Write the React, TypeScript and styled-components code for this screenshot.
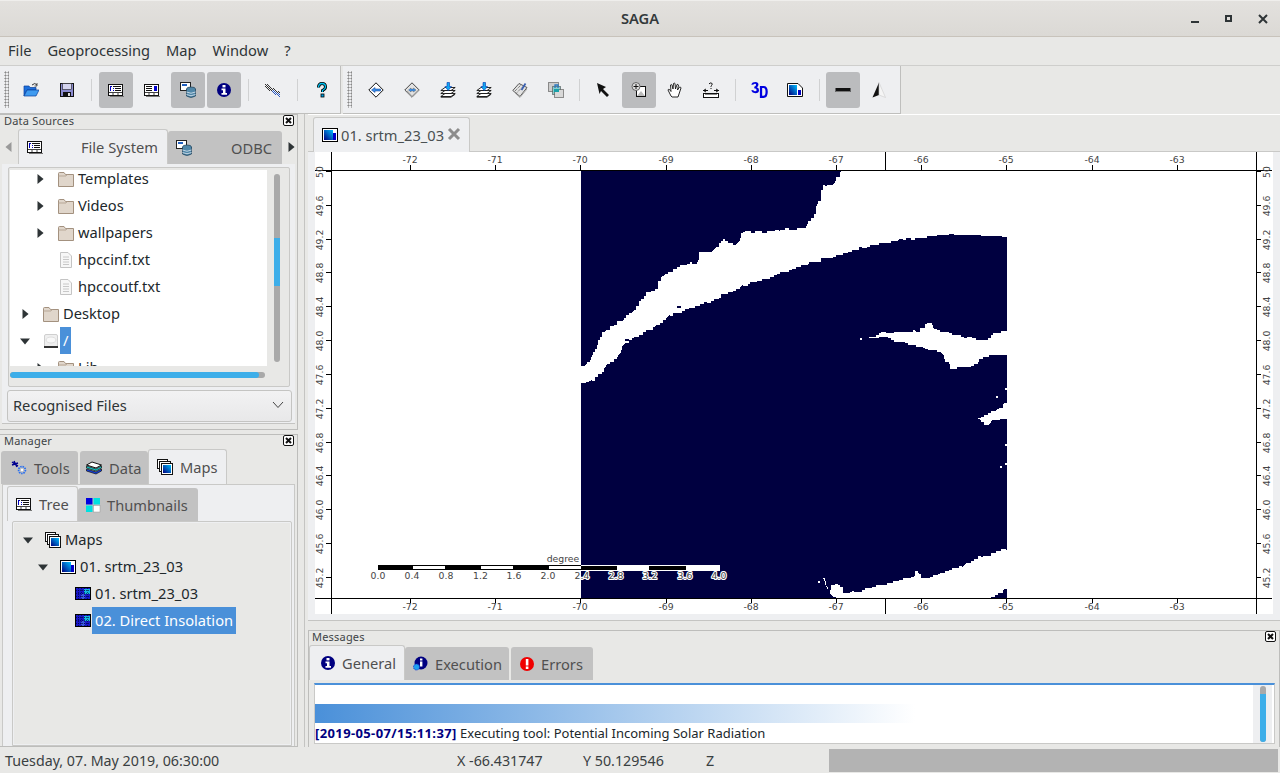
import React from "react";
import styled, { createGlobalStyle } from "styled-components";

const Global = createGlobalStyle`
  html, body { margin: 0; padding: 0; background: #e8e8e6; }
  body { font-family: "Noto Sans", sans-serif; font-size: 14.67px; color: #2e3436; }
  * { box-sizing: border-box; }
  svg { flex: none; }
`;

const Shell = styled.div`
  width: 1280px; height: 773px; display: flex; flex-direction: column; overflow: hidden; background: #e8e8e6;
`;
const TitleBar = styled.header`
  height: 37px; flex: none; display: flex; align-items: center; justify-content: center; position: relative; padding-bottom: 2px;
  background: linear-gradient(#e3e1de, #dbd9d5); border-bottom: 1px solid #c8c3bb; border-top: 1px solid #efeeec;
  font-size: 14.67px; font-weight: 600; color: #33393b;
`;
const WindowButtons = styled.div`
  position: absolute; right: 0; top: 0; height: 36px; display: flex; align-items: center;
`;
const WinBtn = styled.div`
  width: 34px; height: 36px; display: flex; align-items: center; justify-content: center;
`;
const MenuBar = styled.nav`
  height: 29px; flex: none; display: flex; align-items: center; padding: 0 8px 2px; gap: 16px;
  border-bottom: 1px solid #cececc; font-size: 14.67px; color: #2e3436;
`;
const ToolbarRow = styled.div`
  height: 48px; flex: none; display: flex; align-items: stretch;
`;
const ToolGroup = styled.div<{ $w: number; $pad: number }>`
  width: ${(p) => p.$w}px; display: flex; align-items: center; background: #eeeff1; padding-left: ${(p) => p.$pad}px; position: relative;
  border-right: 1px solid #bfbfbd; border-bottom: 1px solid #bfbfbd; margin-right: 2px;
`;
const Grip = styled.div`
  position: absolute; left: 4px; top: 5px; bottom: 5px; width: 5px; background-image: radial-gradient(#888 45%, transparent 50%); background-size: 3px 3px;
`;
const ToolBtn = styled.div<{ $on?: boolean }>`
  width: 34px; height: 36px; margin: 0 1px; border-radius: 3px; display: flex; align-items: center; justify-content: center;
  background: ${(p) => (p.$on ? "#bbbcbe" : "transparent")};
`;
const ToolSep = styled.div<{ $l?: number; $r?: number }>`
  width: 1px; height: 22px; background: #d0d1d2; margin: 0 ${(p) => p.$r ?? 6}px 0 ${(p) => p.$l ?? 6}px;
`;
const Workspace = styled.div`
  flex: 1; min-height: 0; display: flex;
`;
const LeftDock = styled.aside`
  width: 305px; flex: none; display: flex; flex-direction: column; padding-right: 6px; border-right: 1px solid #c4c4c2;
`;
const DockPanel = styled.section<{ $h: number; $top?: number }>`
  height: ${(p) => p.$h}px; margin-top: ${(p) => p.$top ?? 0}px; flex: none; display: flex; flex-direction: column; position: relative;
  border-top: 1px solid #bdbdbb; border-right: 1px solid #bdbdbb; border-bottom: 1px solid #bdbdbb;
`;
const DockTitle = styled.div`
  height: 13px; flex: none; font-size: 11px; line-height: 11px; padding: 0 3px 2px 4px; color: #3d4345; letter-spacing: 0.2px;
  display: flex; justify-content: space-between; align-items: center;
`;
const TabStrip = styled.div<{ $pad?: number }>`
  display: flex; align-items: flex-end; height: 35px; flex: none; padding-left: ${(p) => p.$pad ?? 0}px; margin-top: 1px;
`;
const Tab = styled.div<{ $on?: boolean; $w: number; $pl?: number; $gap?: number; $ml?: number }>`
  width: ${(p) => p.$w}px; height: ${(p) => (p.$on ? 35 : 33)}px; display: flex; align-items: center; gap: ${(p) => p.$gap ?? 7}px;
  padding: 0 ${(p) => (p.$on ? 9 : 10)}px 0 ${(p) => p.$pl ?? 8}px; flex: none; margin-left: ${(p) => p.$ml ?? 0}px; white-space: nowrap;
  font-size: 14.67px; color: #505050; border-radius: 3px 3px 0 0;
  background: ${(p) => (p.$on ? "#eeeff1" : "#c2c2c2")};
  border: ${(p) => (p.$on ? "1px solid #c9c9c7" : "none")}; border-bottom: none;
`;
const TabLabelEnd = styled.span`
  margin-left: auto;
`;
const ArrowCell = styled.div`
  width: 18px; flex: none; display: flex; align-items: center; justify-content: center; align-self: center;
`;
const TabPane = styled.div`
  margin: 0 2px; height: 260px; flex: none; background: #eeeff1; border-bottom: 1px solid #c4c4c2; padding-top: 3px;
`;
const FileBox = styled.div`
  height: 220px; margin: 0 5px 0 6px; background: #e8e8e6; border: 1px solid #c9c9c7; border-radius: 2px; display: flex; flex-direction: column; padding: 2px 2px 0 1px;
`;
const FileTop = styled.div`
  height: 196px; flex: none; display: flex;
`;
const Caret = styled.div`
  width: 14px; height: 14px; flex: none; display: flex; align-items: center; justify-content: center; margin-right: 10px;
`;
const TreeView = styled.div`
  width: 259px; height: 196px; background: #fff; overflow: hidden;
  ${Caret} { margin-right: 11px; }
`;
const Row = styled.div<{ $depth: number }>`
  height: 27px; display: flex; align-items: center; padding-left: ${(p) => p.$depth * 15 + 8}px; font-size: 14.67px; color: #20272b; white-space: nowrap; flex: none;
`;
const ScrolledRow = styled(Row)`
  height: 17px; margin-bottom: 5px;
`;
const Label = styled.span<{ $sel?: boolean }>`
  height: 27px; line-height: 26px; padding: 0 3px; margin-left: 1px; background: ${(p) => (p.$sel ? "#4a90d9" : "transparent")}; color: ${(p) => (p.$sel ? "#fff" : "inherit")};
`;
const VScroll = styled.div`
  width: 20px; flex: none; display: flex; justify-content: center; padding-top: 4px;
`;
const VTrack = styled.div`
  width: 6px; height: 188px; border-radius: 3px; background: #a9a9a9; position: relative; overflow: hidden;
`;
const ScrollThumb = styled.div<{ $top: number; $len: number }>`
  position: absolute; left: 0; right: 0; top: ${(p) => p.$top}px; height: ${(p) => p.$len}px; background: #3daee9;
`;
const HScroll = styled.div`
  height: 6px; width: 255px; margin-top: 6px; background: #a9a9a9; border-radius: 3px; overflow: hidden;
`;
const HThumb = styled.div`
  height: 100%; width: 249px; background: #3daee9; border-radius: 3px;
`;
const Combo = styled.div`
  height: 32px; margin: 3px 3px 0 5px; border: 1px solid #c4c4c2; border-radius: 3px; background: linear-gradient(#f2f2f3, #e8e8e9);
  display: flex; align-items: center; justify-content: space-between; padding: 0 7px 2px 5px; font-size: 14.67px; color: #2e3436;
`;
const ManagerBody = styled.div`
  flex: 1; min-height: 0; background: #eeeff1; border: 1px solid #c9c9c7; border-bottom: none; margin-left: 2px; margin-right: 2px; padding: 2px 0 0 4px; display: flex; flex-direction: column;
`;
const InnerStrip = styled.div`
  display: flex; align-items: flex-end; height: 34px; flex: none;
`;
const TreeBox = styled.div`
  flex: 1; min-height: 0; margin: 0 2px 0 5px; background: #e8e8e6; border: 1px solid #c9c9c7; border-radius: 2px 2px 0 0; padding-top: 4px;
  box-shadow: inset 0 0 0 1px #eeeff1; overflow: hidden;
`;
const RightDock = styled.main`
  flex: 1; min-width: 0; display: flex; flex-direction: column; padding-left: 3px;
`;
const MapDoc = styled.section`
  height: 507px; flex: none; display: flex; flex-direction: column; border-top: 1px solid #fff;
`;
const DocTabs = styled.div`
  height: 37px; flex: none; padding: 2px 0 0 5px; display: flex; align-items: flex-end; border-bottom: 1px solid #c9c9c7;
`;
const DocTab = styled.div`
  width: 157px; height: 35px; background: #eeeff1; border: 1px solid #c9c9c7; border-bottom: none; border-radius: 3px 3px 0 0; display: flex; align-items: center;
  padding: 0 9px 0 8px; gap: 3px; font-size: 14.67px; color: #4a5052; margin-bottom: -1px; white-space: nowrap;
`;
const MapPane = styled.div`
  flex: 1; min-height: 0; background: #eeeff1; padding: 0 6px 6px 7px; border-bottom: 1px solid #c4c4c2;
`;
const MapSvg = styled.svg`
  display: block; width: 958px; height: 462px; background: #fff;
`;
const MessagesDock = styled.section`
  height: 117px; flex: none; margin-top: 9px; border: 1px solid #bdbdbb; border-bottom: none; display: flex; flex-direction: column;
  ${DockTitle} { padding-left: 3px; }
`;
const MsgBox = styled.div`
  flex: 1; min-height: 0; margin: 3px 4px 3px 5px; background: #fff; border: 1px solid #c9c9c7; border-top: 2px solid #4a90d9; display: flex; position: relative;
`;
const MsgText = styled.div`
  flex: 1; min-width: 0; padding-top: 19px; font-size: 13px; color: #20272b; white-space: nowrap;
`;
const MsgGradient = styled.div`
  height: 19px; width: 600px; background: linear-gradient(90deg, #4a90d9, #ffffff);
`;
const MsgLine = styled.div`
  height: 20px; line-height: 21px; padding-left: 0;
`;
const Stamp = styled.b`
  color: #000080; font-weight: 700; letter-spacing: 0.38px;
`;
const MsgScroll = styled.div`
  width: 19px; flex: none; display: flex; justify-content: center; background: #eeeff1; margin-right: 2px; padding-top: 1px;
`;
const MsgTrack = styled.div`
  width: 6px; height: 56px; background: #a9a9a9; border-radius: 3px; position: relative; overflow: hidden;
`;
const StatusBar = styled.footer`
  height: 26px; flex: none; display: flex; align-items: center; font-size: 14.25px; color: #3a4042; padding: 0 2px 0 5px;
`;
const StatusCell = styled.span<{ $w: number }>`
  width: ${(p) => p.$w}px; flex: none; white-space: nowrap;
`;
const StatusGauge = styled.div`
  flex: 1; height: 23px; background: #b3b3b3;
`;

const Arrow = ({ dir, color = "#2e3436", s = 5 }: { dir: "r" | "d" | "l"; color?: string; s?: number }) => (
  <svg width="12" height="12" viewBox="0 0 12 12">
    {dir === "r" && <path d={`M${6 - s / 2} ${6 - s} L${6 + s / 1.4} 6 L${6 - s / 2} ${6 + s} Z`} fill={color} />}
    {dir === "l" && <path d={`M${6 + s / 2} ${6 - s} L${6 - s / 1.4} 6 L${6 + s / 2} ${6 + s} Z`} fill={color} />}
    {dir === "d" && <path d={`M${6 - s} ${6 - s / 2} L${6 + s} ${6 - s / 2} L6 ${6 + s / 1.4} Z`} fill={color} />}
  </svg>
);

const S: React.FC<{ children: React.ReactNode; w?: number; h?: number }> = ({ children, w = 16, h = 16 }) => (
  <svg width={w} height={h} viewBox="0 0 16 16">{children}</svg>
);

const Folder = () => (
  <S><path d="M.5 15.5V2.5Q.5 1.5 1.5 1.5H6L7.5 3.5H15.5V15.5Z" fill="#e0d6cb" stroke="#a3917f" /><path d="M.5 5H8L9 3.5" fill="none" stroke="#b7a797" /></S>
);
const Doc = () => (
  <S><path d="M2.5 .5H10L13.5 4V15.5H2.5Z" fill="#f7f7f7" stroke="#c4c4c4" /><path d="M5 5H11M5 7.5H11M5 10H11M5 12.5H11" stroke="#c8c8c8" /></S>
);
const Disk = () => (
  <S><rect x="1.5" y="1.5" width="13" height="13" rx="1.5" fill="#efefef" stroke="#cfcfcf" /><ellipse cx="8" cy="7" rx="5" ry="3" fill="#f8f8f8" stroke="#dedede" /><rect x="1" y="13" width="14" height="2" fill="#333" /></S>
);
const OpenFolder = () => (
  <S><path d="M1 14V4H6L7 5.5H13V8H4L1 14Z" fill="#1c6fdc" stroke="#0a3f9c" strokeWidth=".7" /><path d="M1 14L4 8H16L13 14Z" fill="#3f9bf0" stroke="#0a3f9c" strokeWidth=".7" /><path d="M9 3Q12 0 14 3" fill="none" stroke="#333" strokeWidth="1" /><path d="M14 1V4H11.5" fill="none" stroke="#333" strokeWidth=".8" /></S>
);
const Floppy = () => (
  <S><rect x="1.5" y="1.5" width="13" height="13" fill="#8a8ad0" stroke="#111" /><rect x="3.5" y="1.5" width="9" height="6" fill="#d4d4ee" stroke="#222" strokeWidth=".6" /><rect x="4" y="10" width="8" height="4.5" fill="#111" /><rect x="9" y="11" width="2" height="3" fill="#ddd" /></S>
);
const TreeWin = ({ blue }: { blue?: boolean }) => (
  <S>
    <rect x=".5" y="2.5" width="14" height="11" fill="#fff" stroke="#111" />
    <rect x="2" y="14" width="14" height="1" fill="#777" />
    <path d="M.5 10.5H14.5M5 11V13.5M10 11V13.5" stroke="#111" strokeWidth=".8" />
    {blue ? (
      <><rect x="10" y="4" width="3" height="5" fill="#0000d0" /><path d="M2 4.5H8M2 6.5H8M2 8.5H8" stroke="#111" /></>
    ) : (
      <><path d="M2 4.5H4M5 6.5H6M5 8.5H6" stroke="#0000c0" /><path d="M2.5 4V9" stroke="#0000c0" /><path d="M5 4.5H13M7 6.5H13M7 8.5H13" stroke="#111" /></>
    )}
  </S>
);
const SrcIcon = () => (
  <S>
    <rect x="0.5" y="0.5" width="10" height="8" fill="#fff" stroke="#222" />
    <rect x="2" y="2" width="5" height="2" fill="#2060c0" />
    <ellipse cx="11" cy="7" rx="4.5" ry="2" fill="#4f86a8" stroke="#1c3f58" strokeWidth=".7" />
    <path d="M6.5 7V14Q11 17 15.5 14V7" fill="#4f86a8" stroke="#1c3f58" strokeWidth=".7" />
    <path d="M6.5 10Q11 12.5 15.5 10M6.5 12.5Q11 15 15.5 12.5" fill="none" stroke="#dfeaf2" strokeWidth=".8" />
  </S>
);
const Info = ({ size = 16 }: { size?: number }) => (
  <S w={size} h={size}><circle cx="8" cy="8" r="7" fill="#000080" /><rect x="6.5" y="3" width="3" height="2.4" fill="#fff" /><path d="M5.5 6.5H9.5V11H11V12.8H5.5V11H7V8.2H5.5Z" fill="#fff" /></S>
);
const DITHER: [number, number, string][] = (() => {
  const out: [number, number, string][] = [];
  for (let x = 0; x < 15; x++) {
    const mid = Math.round(3 + x * 0.65);
    for (let y = mid - 2; y <= mid + 2; y++) {
      if ((x + y) % 2) continue;
      out.push([x, y, x > 6 && y >= mid ? "#2a58c0" : "#333"]);
    }
  }
  return out;
})();
const Gears = () => (
  <S>
    <g shapeRendering="crispEdges">
      {DITHER.map(([x, y, c]) => <rect key={`${x}-${y}`} x={x} y={y} width="1" height="1" fill={c} />)}
    </g>
  </S>
);
const Help = () => (
  <S><path d="M4.5 5.5Q4.5 1.5 8 1.5Q11.5 1.5 11.5 5Q11.5 7 8.5 8.5V10" fill="none" stroke="#000" strokeWidth="3" /><path d="M4.5 5.5Q4.5 1.5 8 1.5Q11.5 1.5 11.5 5Q11.5 7 8.5 8.5V10" fill="none" stroke="#00c0f0" strokeWidth="1.3" /><rect x="7" y="12" width="3" height="3" fill="#00a0e0" stroke="#000" strokeWidth=".8" /></S>
);
const Diamond = ({ grey }: { grey?: boolean }) => (
  <S>
    <path d="M8 .8L15.2 8L8 15.2L.8 8Z" fill={grey ? "#e2e2e2" : "#fff"} stroke={grey ? "#444" : "#111"} />
    {grey ? <path d="M3 9L8 14.5L14.5 8" fill="none" stroke="#aaa" strokeWidth="1.2" /> : null}
    {grey ? <path d="M4.5 8L7 6V7H9.5V6L12 8L9.5 10V9H7V10Z" fill="#3a8ee8" stroke="#555" strokeWidth=".4" /> : <path d="M3.5 8L7 5.5V7H12.5V9H7V10.5Z" fill="#3a8ee8" stroke="#0b3a92" strokeWidth=".5" />}
  </S>
);
const Stack = () => (
  <S>
    {[6, 9, 12].map((y) => (
      <path key={y} d={`M.8 ${y + 2.5}L5 ${y - 0.5}H15.2L11 ${y + 2.5}Z`} fill="#fff" stroke="#111" strokeWidth=".9" />
    ))}
    <path d="M.8 15.2H11L15.2 12.2" fill="none" stroke="#111" strokeWidth=".9" />
    <path d="M7 0.5H9.5V4.5H11.5L8.2 8.5L5 4.5H7Z" fill="#10a8f0" stroke="#0030b0" strokeWidth=".6" />
  </S>
);
const Layers2 = () => (
  <S>
    <path d="M.8 8.5L7 1.5L15 5.5L8 14.5Z" fill="#e2e2e2" stroke="#333" strokeWidth=".8" />
    <path d="M3 9L9 3M5 10.5L11 4.5" stroke="#555" strokeDasharray="1 1" />
    <path d="M9.5 8L13.5 1.5" stroke="#3a60b0" strokeWidth="1.8" />
    <path d="M3 11L8 15.5L15 7" fill="none" stroke="#aaa" />
  </S>
);
const DotStack = () => (
  <S>
    <rect x=".5" y=".5" width="10" height="9" fill="#ccc" stroke="#333" strokeDasharray="1 1" />
    <rect x="4.5" y="4.5" width="8" height="8" fill="#88cccc" stroke="#333" strokeDasharray="1 1" />
    <rect x="6.5" y="7.5" width="9" height="8" fill="#d8d8d8" stroke="#333" strokeDasharray="1 1" />
    <path d="M7 6V3H10V6" fill="none" stroke="#2a78c0" strokeWidth="1.3" />
    <rect x="6" y="7" width="5" height="3" fill="#18a0a8" />
  </S>
);
const Cursor = () => (
  <S><path d="M2 1L11 5L8 7L14 13L12 15L6 9L4.5 12Z" fill="#111" /></S>
);
const ZoomBox = () => (
  <S><rect x="5.5" y="4.5" width="9" height="10" fill="#fff" stroke="#111" strokeWidth="1" /><path d="M6 14L10 9L14 14Z" fill="#bbb" /><circle cx="5" cy="4.5" r="4" fill="#ddd" stroke="#666" /><path d="M5 2V7M2.5 4.5H7.5" stroke="#111" /></S>
);
const Hand = () => (
  <S><path d="M4 14L1 8Q1 7 2.5 7.5L4 9.5L3.5 3Q4.5 2 5 3L6 7L6.5 1.5Q7.5 .8 8 1.5L8.5 7L10 2.5Q11 2 11.5 3L10.5 8L12.5 5Q14 5 14 6L12 12L11 15H5Z" fill="#fff" stroke="#111" strokeWidth=".9" /></S>
);
const Measure = () => (
  <S><path d="M6 2Q7 .5 8.5 1Q10 2 8.5 3.5L8 4.5V5" fill="none" stroke="#111" /><rect x="7.5" y="6" width="1" height="1" fill="#111" /><path d="M0 8.5H5M3 7L.5 8.5L3 10M16 8.5H11M13 7L15.5 8.5L13 10" fill="none" stroke="#111" /><rect x=".5" y="11.5" width="15" height="4" fill="#fff" stroke="#111" /><path d="M3 11.5V13M5 11.5V13M7 11.5V13M9 11.5V13M11 11.5V13M13 11.5V13" stroke="#111" /></S>
);
const View3D = () => (
  <S w={18} h={18}><path d="M1 3Q2 .8 4.8 .8Q7.5 .8 7.5 3.2Q7.5 5 6 5.5Q8 6 8 8.2Q8 10.8 4.8 10.8Q2 10.8 1 8.5L2.8 8Q3.2 9.2 4.5 9.2Q5.9 9.2 5.9 8Q5.9 6.5 3.8 6.4V5Q5.4 5 5.4 3.4Q5.4 2.4 4.5 2.4Q3.4 2.4 2.8 3.4Z" fill="#0000e0" /><path d="M8.8 4.5H12Q15.8 4.5 15.8 9.5Q15.8 15 12 15H8.8ZM10.8 6.3V13.2H12Q13.8 13.2 13.8 9.6Q13.8 6.3 12 6.3Z" fill="#0000e0" fillRule="evenodd" /></S>
);
const MapThumb = ({ s = 16 }: { s?: number }) => (
  <svg width={s} height={s} viewBox="0 0 16 16">
    <defs><linearGradient id="mg" x1="0" y1="1" x2="1" y2="0"><stop offset="0" stopColor="#000080" /><stop offset="1" stopColor="#00c0ff" /></linearGradient></defs>
    <rect x=".5" y="1.5" width="15" height="13" fill="#fff" stroke="#000" />
    <rect x="2" y="3" width="9" height="10" fill="url(#mg)" />
    <rect x="11" y="3" width="3" height="10" fill="#0000c8" />
    <rect x="11" y="3" width="3" height="3" fill="#fff" />
  </svg>
);
const MapSave = () => (
  <S><path d="M.5 1.5H11L15.5 6V14.5H.5Z" fill="#fff" stroke="#111" /><rect x="2" y="3" width="8" height="10" fill="url(#mg)" /><rect x="11" y="8" width="3" height="5" fill="#0000c0" /></S>
);
const Ruler = () => (
  <S><rect x=".5" y="6" width="15" height="4" fill="#111" /><path d="M2 9V10M4 9V10M6 9V10M8 9V10M10 9V10M12 9V10M14 9V10" stroke="#ddd" /></S>
);
const North = () => (
  <S><path d="M8 .5L1.5 15.5L8 13Z" fill="#111" /><path d="M8 .5L14.5 15.5L8 13Z" fill="#f5f5f5" stroke="#ccc" strokeWidth=".6" /></S>
);
const Close = () => (
  <svg width="11" height="11" viewBox="0 0 11 11"><rect x=".5" y=".5" width="10" height="10" rx="1.5" fill="#fff" stroke="#111" /><path d="M3 3L8 8M8 3L3 8" stroke="#111" strokeWidth="2" /></svg>
);
const Tools = () => (
  <S><path d="M1 2L7 6M3 1L6 7M1 5L7 3" stroke="#000090" strokeWidth="1.5" /><circle cx="11" cy="10" r="3.4" fill="none" stroke="#2a70f0" strokeWidth="1.8" strokeDasharray="1.5 .8" /><circle cx="11" cy="10" r="1.2" fill="#fff" /></S>
);
const Data = () => (
  <S><path d="M.5 5L6 2L15.5 5L10 8Z" fill="#fff" stroke="#111" /><path d="M.5 8L10 11L15.5 8V6L10 9L.5 6Z" fill="#12c8c8" stroke="#111" strokeWidth=".7" /><path d="M.5 11L10 14L15.5 11V9L10 12L.5 9Z" fill="#1440e0" stroke="#111" strokeWidth=".7" /></S>
);
const Maps = () => (
  <S>
    <rect x=".5" y=".5" width="10" height="9" fill="#fff" stroke="#111" />
    <rect x="2.5" y="2.5" width="11" height="10" fill="#fff" stroke="#111" />
    <rect x="4.5" y="4.5" width="11" height="11" fill="#fff" stroke="#111" />
    <rect x="6" y="6" width="8" height="8" fill="url(#mg)" />
  </S>
);
const Thumbs = () => (
  <S><rect x="1" y="1" width="6.5" height="6.5" fill="#0000e0" /><rect x="8.5" y="1" width="6.5" height="6.5" fill="#00e0e0" /><rect x="1" y="8.5" width="6.5" height="6.5" fill="#00e0e0" /><rect x="8.5" y="8.5" width="6.5" height="6.5" fill="#fff" stroke="#999" strokeWidth=".5" /></S>
);
const GridIcon = () => (
  <S>
    <rect x=".5" y="1.5" width="15" height="12" fill="#1818c8" stroke="#000" />
    <rect x="9" y="3" width="6" height="5" fill="#12b8e0" />
    <rect x="6" y="8" width="4" height="5" fill="#3858e0" />
    <path d="M3.5 2V13M6.5 2V13M9.5 2V13M12.5 2V13M1 4.5H15M1 7.5H15M1 10.5H15" stroke="#000030" strokeWidth=".6" strokeDasharray="1 1" />
  </S>
);
const ExecIcon = () => (
  <S><circle cx="9" cy="7" r="6.5" fill="#000080" /><rect x="8" y="2.5" width="2.4" height="2" fill="#fff" /><rect x="8" y="5.5" width="2.4" height="5" fill="#fff" /><circle cx="4.5" cy="11" r="3" fill="#20a0f0" stroke="#1030d0" strokeDasharray="1 .8" /></S>
);
const ErrIcon = () => (
  <S><circle cx="8" cy="8" r="7" fill="#f00000" /><rect x="6.8" y="3" width="2.6" height="6.5" fill="#fff" /><rect x="6.8" y="10.5" width="2.6" height="2.5" fill="#fff" /></S>
);
const TabClose = () => (
  <svg width="14" height="14" viewBox="0 0 14 14"><path d="M2 2L12 12M12 2L2 12" stroke="#8c8c8c" strokeWidth="3" /></svg>
);

const xTicks = [-72, -71, -70, -69, -68, -67, -66, -65, -64, -63].map((v, i) => ({ v, x: Math.round(410 + 85.2 * i) }));
const yTicks = ["50", "49.6", "49.2", "48.8", "48.4", "48.0", "47.6", "47.2", "46.8", "46.4", "46.0", "45.6", "45.2"].map((v, i) => ({ v, y: Math.round(172 + 33.83 * i) }));

type Pt = [number, number];
const parsePts = (s: string): Pt[] => s.split(" ").map((p) => p.split(",").map(Number) as Pt);
const hash = (n: number) => {
  const v = Math.sin(n * 12.9898) * 43758.5453;
  return v - Math.floor(v);
};
const inFrame = ([x, y]: Pt) => x >= 581 && x <= 1007 && y >= 170 && y <= 598;
// Turns a smooth outline into the fine stair steps of the raster grid.
const roughen = (src: string, seed: number) => {
  const pts = parsePts(src);
  const out: Pt[] = [];
  const CELL = 1.7;
  const snap = (v: number) => Math.round(v / CELL) * CELL;
  pts.forEach((a, i) => {
    const b = pts[(i + 1) % pts.length];
    if (!inFrame(a) || !inFrame(b)) {
      out.push(a);
      return;
    }
    const n = Math.max(1, Math.round(Math.hypot(b[0] - a[0], b[1] - a[1]) / 4));
    let prev: Pt = a;
    for (let k = 0; k < n; k++) {
      const t = k / n;
      const jx = (hash(seed + i * 31 + k) - 0.5) * 2;
      const jy = (hash(seed + i * 17 + k + 7) - 0.5) * 2;
      const p: Pt = [snap(a[0] + (b[0] - a[0]) * t + jx), snap(a[1] + (b[1] - a[1]) * t + jy)];
      out.push([p[0], prev[1]]);
      out.push(p);
      prev = p;
    }
  });
  return out.map((p) => p.join(",")).join(" ");
};

const RIVER = roughen("842,160 840,178 833,185 824,186 822,198 817,207 817,215 805,228 770,231 742,233 740,240 736,244 724,241 713,251 700,252 697,263 683,265 662,277 658,290 648,292 633,312 620,322 603,333 590,362 584,366 570,368 570,385 584,383 592,380 607,365 620,353 625,343 657,325 670,315 707,302 743,285 803,265 863,247 903,239 953,234 1005,237 1020,237 1020,160", 3);
const ESTUARY = roughen("857,340 882,332 917,331 928,323 937,330 967,338 980,340 1005,331 1020,331 1020,355 1005,355 987,357 970,367 953,369 947,362 940,352 920,347 903,342 887,337 870,338", 11);
const ISLE = roughen("977,418 1000,408 1005,403 1020,403 1020,418 992,420 989,424", 23);
const SOUTH = roughen("1005,550 982,557 963,567 937,575 928,578 918,573 910,578 880,585 857,592 843,593 843,585 835,584 830,590 822,578 827,590 832,596 836,597 836,610 988,610 990,597 1005,589 1020,589 1020,550", 41);
const SPECKS: Pt[] = [[622, 335], [603, 353], [625, 339], [602, 356], [723, 239], [718, 247], [996, 396], [1005, 388], [1005, 444], [1000, 466], [1005, 463], [818, 581], [852, 591], [845, 595]];
const DARK_SPECKS: Pt[] = [[677, 306], [692, 262], [625, 339]];

const BAR = [378, 413, 445, 481, 513, 549, 581, 617, 649, 686, 719];
const BAR_LABELS = ["0.0", "0.4", "0.8", "1.2", "1.6", "2.0", "2.4", "2.8", "3.2", "3.6", "4.0"];
const BAR_X = [378, 412, 446, 480.5, 514, 548, 582, 616, 650, 685, 719];

const Plot = () => (
  <MapSvg viewBox="315 152 958 462">
    <g shapeRendering="crispEdges">
      <rect x="581" y="170" width="426" height="428" fill="#000040" />
      <polygon points={RIVER} fill="#fff" />
      <polygon points={ESTUARY} fill="#fff" />
      <polygon points={ISLE} fill="#fff" />
      <polygon points={SOUTH} fill="#fff" />
      {SPECKS.map(([x, y]) => <rect key={`${x}-${y}`} x={x} y={y} width="2" height="2" fill="#fff" />)}
      {DARK_SPECKS.map(([x, y]) => <rect key={`${x}-${y}`} x={x} y={y} width="4" height="2" fill="#000040" />)}
      <rect x="1007" y="165" width="245" height="440" fill="#fff" />
      <rect x="560" y="598" width="500" height="16" fill="#fff" />
      <rect x="575" y="152" width="500" height="18" fill="#fff" />
      <path d="M315 170.5H1272M315 598.5H1272M331.5 152V614M1256.5 152V614M885.5 152V170M885.5 598V614" stroke="#000" fill="none" />
      {xTicks.map((t) => (
        <path key={t.v} d={`M${t.x}.5 165V170M${t.x}.5 598V603`} stroke="#000" />
      ))}
      {yTicks.map((t) => (
        <path key={t.v} d={`M326 ${t.y - 1}.5H331M1256 ${t.y - 1}.5H1261`} stroke="#000" />
      ))}
    </g>
    <g fontFamily="'DejaVu Sans', sans-serif" fontSize="9.3" fill="#444" textAnchor="middle">
      {xTicks.map((t) => (
        <React.Fragment key={t.v}>
          <text x={t.x} y={163}>{t.v}</text>
          <text x={t.x} y={610}>{t.v}</text>
        </React.Fragment>
      ))}
      {yTicks.map((t) => (
        <React.Fragment key={t.v}>
          <text transform={`translate(323 ${t.y}) rotate(-90)`}>{t.v}</text>
          <text transform={`translate(1270 ${t.y}) rotate(-90)`}>{t.v}</text>
        </React.Fragment>
      ))}
    </g>
    <g shapeRendering="crispEdges">
      <rect x="378" y="565" width="342" height="6" fill="#fff" />
      {BAR.slice(0, -1).map((x, i) => (
        <rect key={x} x={x} y={i % 2 ? 567 : 565} width={BAR[i + 1] - x} height={i % 2 ? 3 : 5} fill={i % 2 ? "#fff" : "#000"} />
      ))}
      <path d="M581 565.5H719.5V570.5H581" fill="none" stroke="#fff" />
      <path d="M413 565.5H445M481 565.5H513M549 565.5H581M413 569.5H445M481 569.5H513M549 569.5H581" stroke="#000" />
    </g>
    <g fontFamily="'DejaVu Sans', sans-serif" fontSize="9.3" fill="#444" textAnchor="middle" stroke="#fff" strokeWidth="2.2" paintOrder="stroke" strokeLinejoin="round">
      {BAR_LABELS.map((l, i) => (
        <text key={l} x={BAR_X[i]} y={579}>{l}</text>
      ))}
      <text x="563" y="562">degree</text>
    </g>
  </MapSvg>
);

export default function App() {
  return (
    <Shell>
      <Global />
      <TitleBar>
        SAGA
        <WindowButtons>
          <WinBtn><svg width="10" height="10" viewBox="0 0 10 10"><rect x="1" y="7" width="8" height="2" fill="#2e3436" /></svg></WinBtn>
          <WinBtn><svg width="10" height="10" viewBox="0 0 10 10"><rect x="2" y="2" width="5" height="5" fill="none" stroke="#2e3436" strokeWidth="2" /></svg></WinBtn>
          <WinBtn><svg width="10" height="10" viewBox="0 0 10 10"><path d="M1 1L9 9M9 1L1 9" stroke="#2e3436" strokeWidth="2" /></svg></WinBtn>
        </WindowButtons>
      </TitleBar>
      <MenuBar>
        <span>File</span><span>Geoprocessing</span><span>Map</span><span>Window</span><span>?</span>
      </MenuBar>
      <ToolbarRow>
        <ToolGroup $w={341} $pad={13}>
          <Grip />
          <ToolBtn><OpenFolder /></ToolBtn>
          <ToolBtn><Floppy /></ToolBtn>
          <ToolSep />
          <ToolBtn $on><TreeWin /></ToolBtn>
          <ToolBtn><TreeWin blue /></ToolBtn>
          <ToolBtn $on><SrcIcon /></ToolBtn>
          <ToolBtn $on><Info /></ToolBtn>
          <ToolSep />
          <ToolBtn><Gears /></ToolBtn>
          <ToolSep />
          <ToolBtn><Help /></ToolBtn>
        </ToolGroup>
        <ToolGroup $w={558} $pad={15}>
          <Grip />
          <ToolBtn><Diamond /></ToolBtn>
          <ToolBtn><Diamond grey /></ToolBtn>
          <ToolBtn><Stack /></ToolBtn>
          <ToolBtn><Stack /></ToolBtn>
          <ToolBtn><Layers2 /></ToolBtn>
          <ToolBtn><DotStack /></ToolBtn>
          <ToolSep $l={5} $r={5} />
          <ToolBtn><Cursor /></ToolBtn>
          <ToolBtn $on><ZoomBox /></ToolBtn>
          <ToolBtn><Hand /></ToolBtn>
          <ToolBtn><Measure /></ToolBtn>
          <ToolSep $l={6} $r={5} />
          <ToolBtn><View3D /></ToolBtn>
          <ToolBtn><MapSave /></ToolBtn>
          <ToolSep $l={6} $r={5} />
          <ToolBtn $on><Ruler /></ToolBtn>
          <ToolBtn><North /></ToolBtn>
        </ToolGroup>
      </ToolbarRow>
      <Workspace>
        <LeftDock>
          <DockPanel $h={316}>
            <DockTitle>Data Sources<Close /></DockTitle>
            <TabStrip>
              <ArrowCell><Arrow dir="l" color="#999" /></ArrowCell>
              <Tab $on $w={150}><TreeWin /><TabLabelEnd>File System</TabLabelEnd></Tab>
              <Tab $w={114}><SrcIcon /><TabLabelEnd>ODBC</TabLabelEnd></Tab>
              <ArrowCell><Arrow dir="r" /></ArrowCell>
            </TabStrip>
            <TabPane>
              <FileBox>
                <FileTop>
                  <TreeView>
                    <ScrolledRow $depth={1}><Caret><Arrow dir="r" /></Caret><Folder /><Label>Templates</Label></ScrolledRow>
                    <Row $depth={1}><Caret><Arrow dir="r" /></Caret><Folder /><Label>Videos</Label></Row>
                    <Row $depth={1}><Caret><Arrow dir="r" /></Caret><Folder /><Label>wallpapers</Label></Row>
                    <Row $depth={1}><Caret /><Doc /><Label>hpccinf.txt</Label></Row>
                    <Row $depth={1}><Caret /><Doc /><Label>hpccoutf.txt</Label></Row>
                    <Row $depth={0}><Caret><Arrow dir="r" /></Caret><Folder /><Label>Desktop</Label></Row>
                    <Row $depth={0}><Caret><Arrow dir="d" /></Caret><Disk /><Label $sel>/</Label></Row>
                    <Row $depth={1}><Caret><Arrow dir="r" /></Caret><Folder /><Label>Lib</Label></Row>
                  </TreeView>
                  <VScroll><VTrack><ScrollThumb $top={64} $len={48} /></VTrack></VScroll>
                </FileTop>
                <HScroll><HThumb /></HScroll>
              </FileBox>
              <Combo>Recognised Files<svg width="12" height="8" viewBox="0 0 12 8"><path d="M1 1L6 6.5L11 1" fill="none" stroke="#444" strokeWidth="1" /></svg></Combo>
            </TabPane>
          </DockPanel>
          <DockPanel $h={313} $top={4}>
            <DockTitle>Manager<Close /></DockTitle>
            <TabStrip $pad={1}>
              <Tab $w={77} $pl={10}><Tools /><span>Tools</span></Tab>
              <Tab $w={68} $pl={6} $ml={2}><Data /><span>Data</span></Tab>
              <Tab $on $w={79}><Maps /><span>Maps</span></Tab>
            </TabStrip>
            <ManagerBody>
              <InnerStrip>
                <Tab $on $w={71}><TreeWin /><span>Tree</span></Tab>
                <Tab $w={120} $pl={7} $gap={6}><Thumbs /><span>Thumbnails</span></Tab>
              </InnerStrip>
              <TreeBox>
                <Row $depth={0}><Caret><Arrow dir="d" /></Caret><Maps /><Label>Maps</Label></Row>
                <Row $depth={1}><Caret><Arrow dir="d" /></Caret><MapThumb /><Label>01. srtm_23_03</Label></Row>
                <Row $depth={2}><Caret /><GridIcon /><Label>01. srtm_23_03</Label></Row>
                <Row $depth={2}><Caret /><GridIcon /><Label $sel>02. Direct Insolation</Label></Row>
              </TreeBox>
            </ManagerBody>
          </DockPanel>
        </LeftDock>
        <RightDock>
          <MapDoc>
            <DocTabs>
              <DocTab><MapThumb /><span>01. srtm_23_03</span><TabLabelEnd><TabClose /></TabLabelEnd></DocTab>
            </DocTabs>
            <MapPane><Plot /></MapPane>
          </MapDoc>
          <MessagesDock>
            <DockTitle>Messages<Close /></DockTitle>
            <TabStrip $pad={0}>
              <Tab $on $w={96} $pl={10} $gap={6}><Info /><span>General</span></Tab>
              <Tab $w={104} $pl={7}><ExecIcon /><span>Execution</span></Tab>
              <Tab $w={82} $ml={2} $gap={6}><ErrIcon /><span>Errors</span></Tab>
            </TabStrip>
            <MsgBox>
              <MsgText>
                <MsgGradient />
                <MsgLine><Stamp>[2019-05-07/15:11:37]</Stamp> Executing tool: Potential Incoming Solar Radiation</MsgLine>
              </MsgText>
              <MsgScroll><MsgTrack><ScrollThumb $top={8} $len={48} /></MsgTrack></MsgScroll>
            </MsgBox>
          </MessagesDock>
        </RightDock>
      </Workspace>
      <StatusBar>
        <StatusCell $w={452}>Tuesday, 07. May 2019, 06:30:00</StatusCell>
        <StatusCell $w={126}>X -66.431747</StatusCell>
        <StatusCell $w={123}>Y 50.129546</StatusCell>
        <StatusCell $w={123}>Z</StatusCell>
        <StatusGauge />
      </StatusBar>
    </Shell>
  );
}
